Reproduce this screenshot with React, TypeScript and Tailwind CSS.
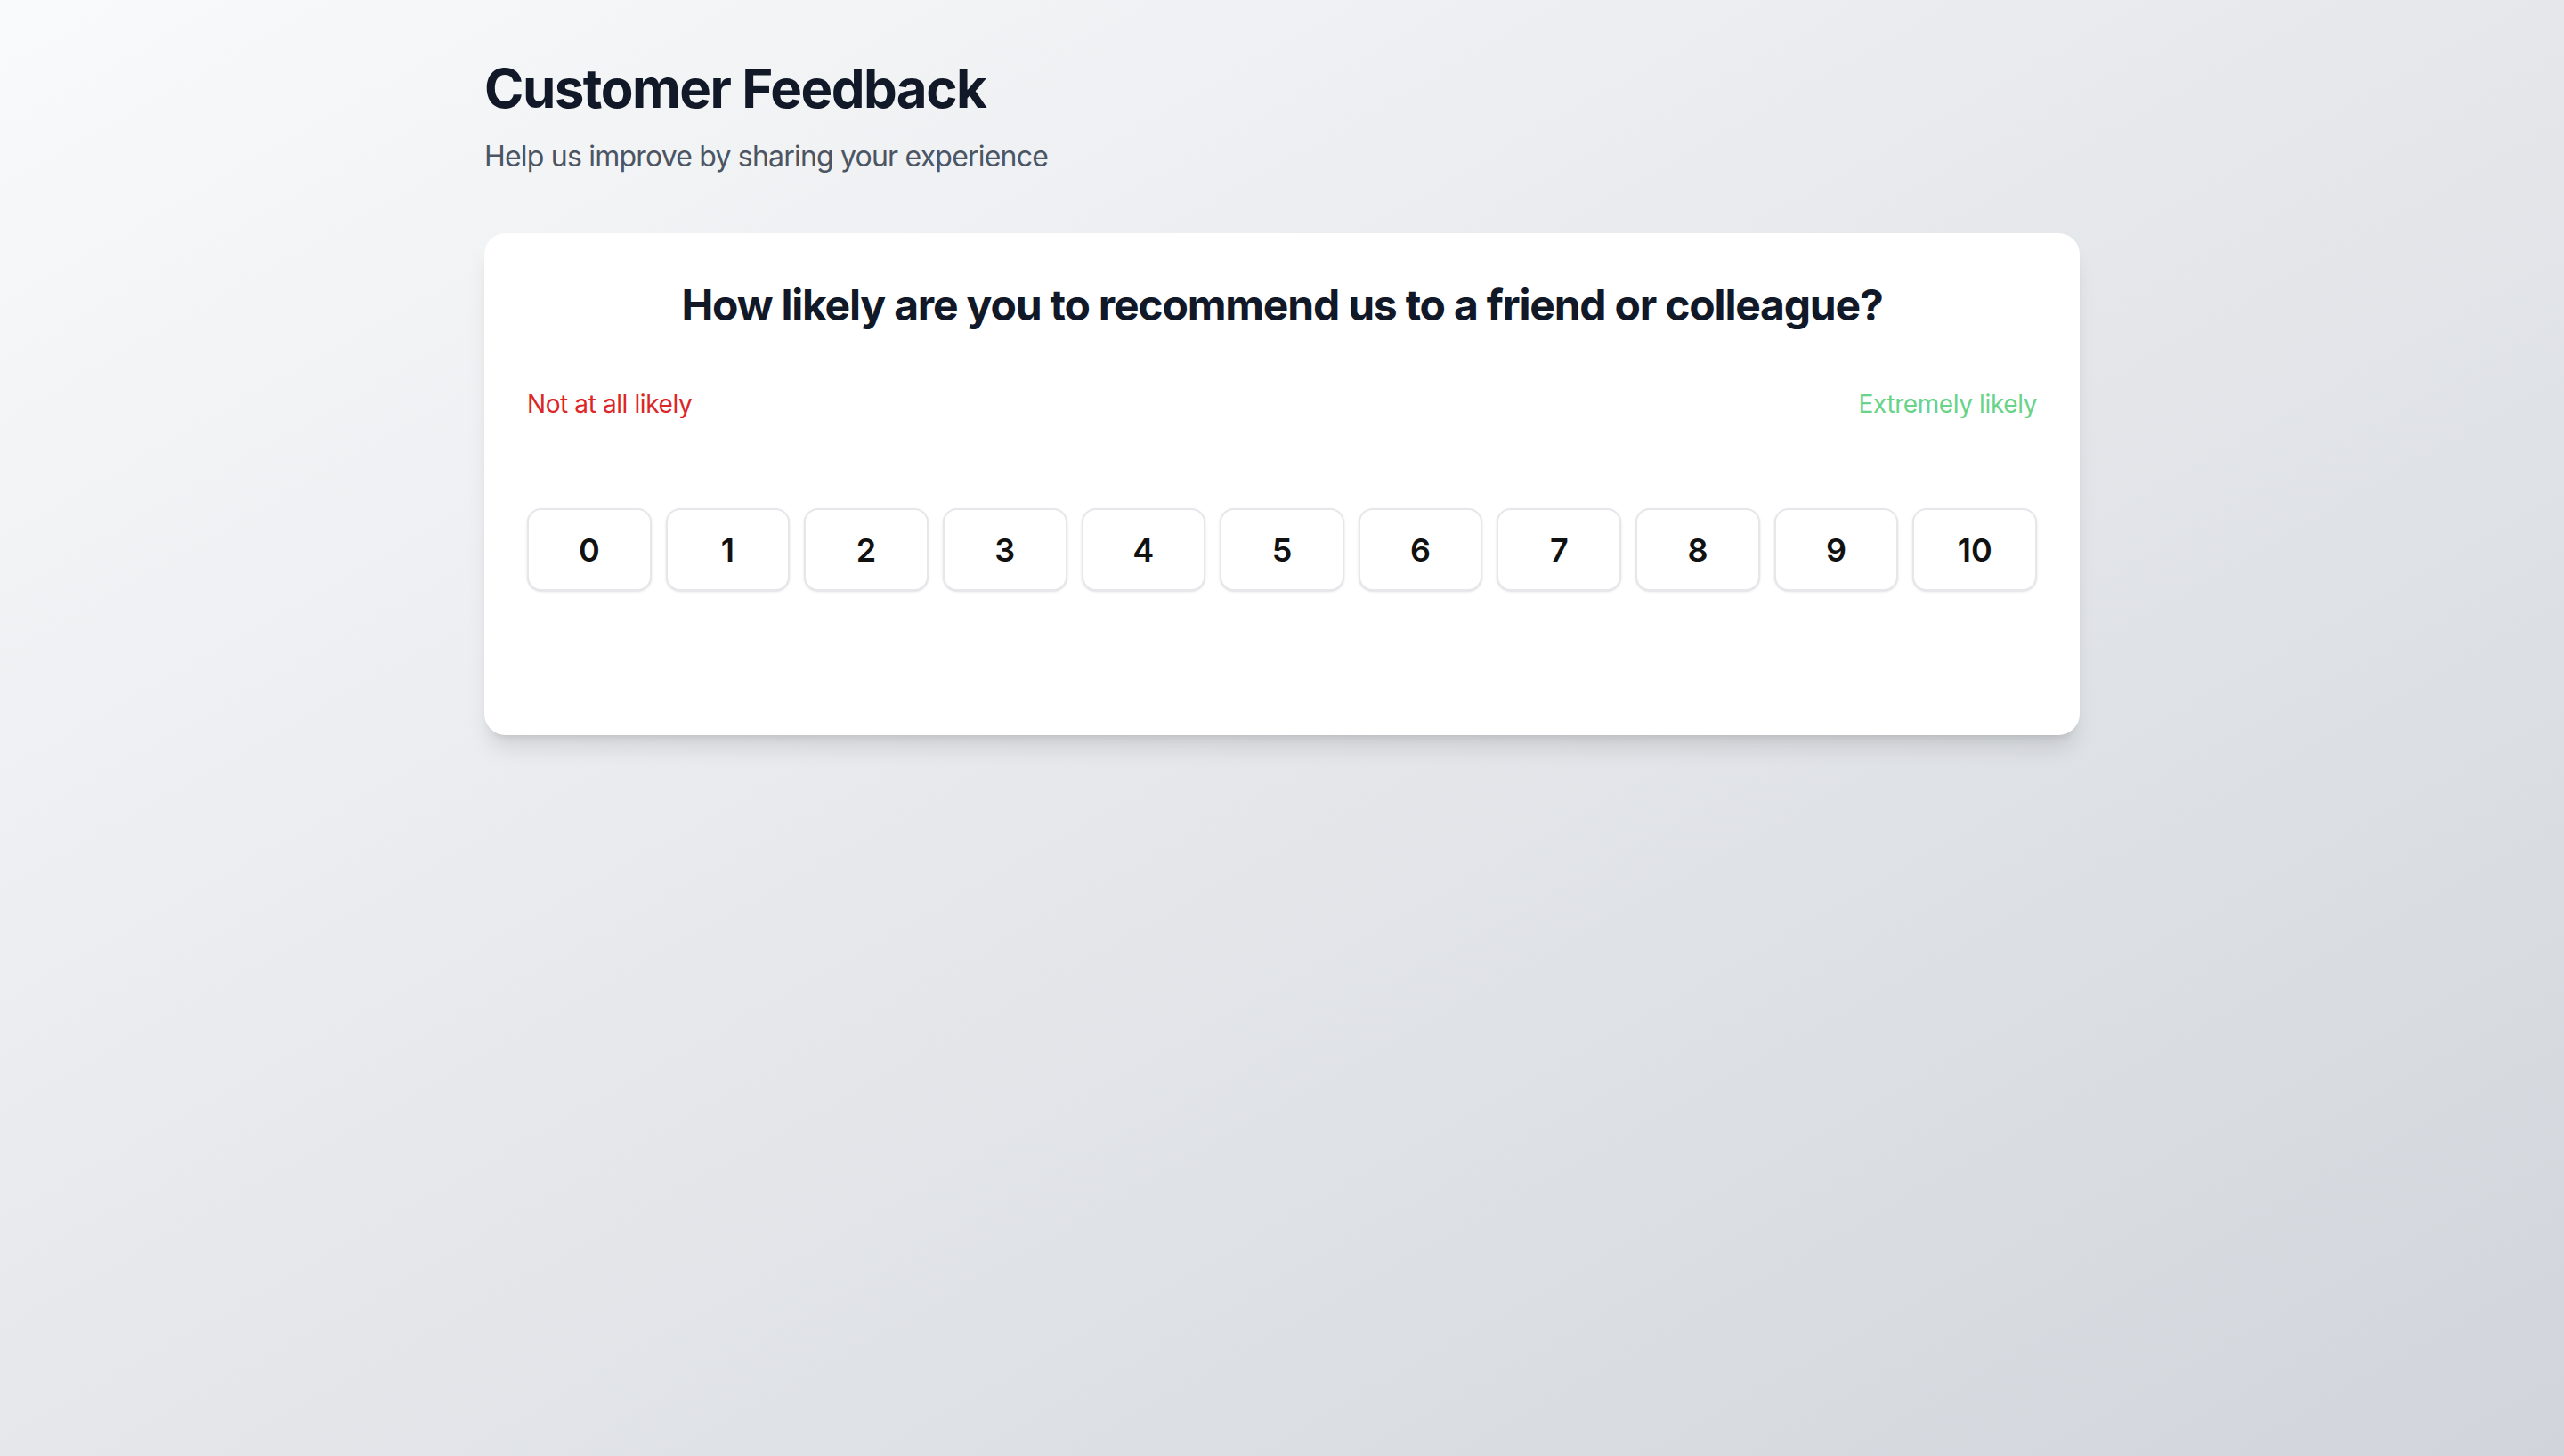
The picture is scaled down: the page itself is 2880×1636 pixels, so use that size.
import React from "react";

const scores = [0, 1, 2, 3, 4, 5, 6, 7, 8, 9, 10];

const App: React.FC = () => {
  return (
    <div className="min-h-screen bg-linear-to-br from-[#f9fafb] to-[#d1d5db] font-['Inter',sans-serif]">
      <div className="max-w-[1792px] mx-auto pt-[69px]">
        <h1 className="text-[60px] leading-[60px] font-bold tracking-tight text-[#111827]">
          Customer Feedback
        </h1>
        <p className="mt-[23px] text-[32px] leading-[48px] tracking-tight text-[#4b5563]">
          Help us improve by sharing your experience
        </p>

        <div className="mt-[62px] bg-white rounded-[24px] shadow-xl px-12 pt-12 pb-[162px]">
          <h2 className="text-center text-[48px] leading-[66px] font-bold tracking-tight text-[#111827]">
            How likely are you to recommend us to a friend or colleague?
          </h2>

          <div className="mt-[58px] flex justify-between text-[28px] leading-[40px] tracking-[-0.4px]">
            <span className="text-[#dc2626]">Not at all likely</span>
            <span className="text-[#68d389]">Extremely likely</span>
          </div>

          <div className="mt-[97px] grid grid-cols-11 gap-4">
            {scores.map((score) => (
              <button
                key={score}
                className="h-[93px] bg-white border-2 border-[#e5e7eb] rounded-[16px] shadow-sm text-[36px] font-semibold text-[#111111]"
              >
                {score}
              </button>
            ))}
          </div>
        </div>
      </div>
    </div>
  );
};

export default App;
